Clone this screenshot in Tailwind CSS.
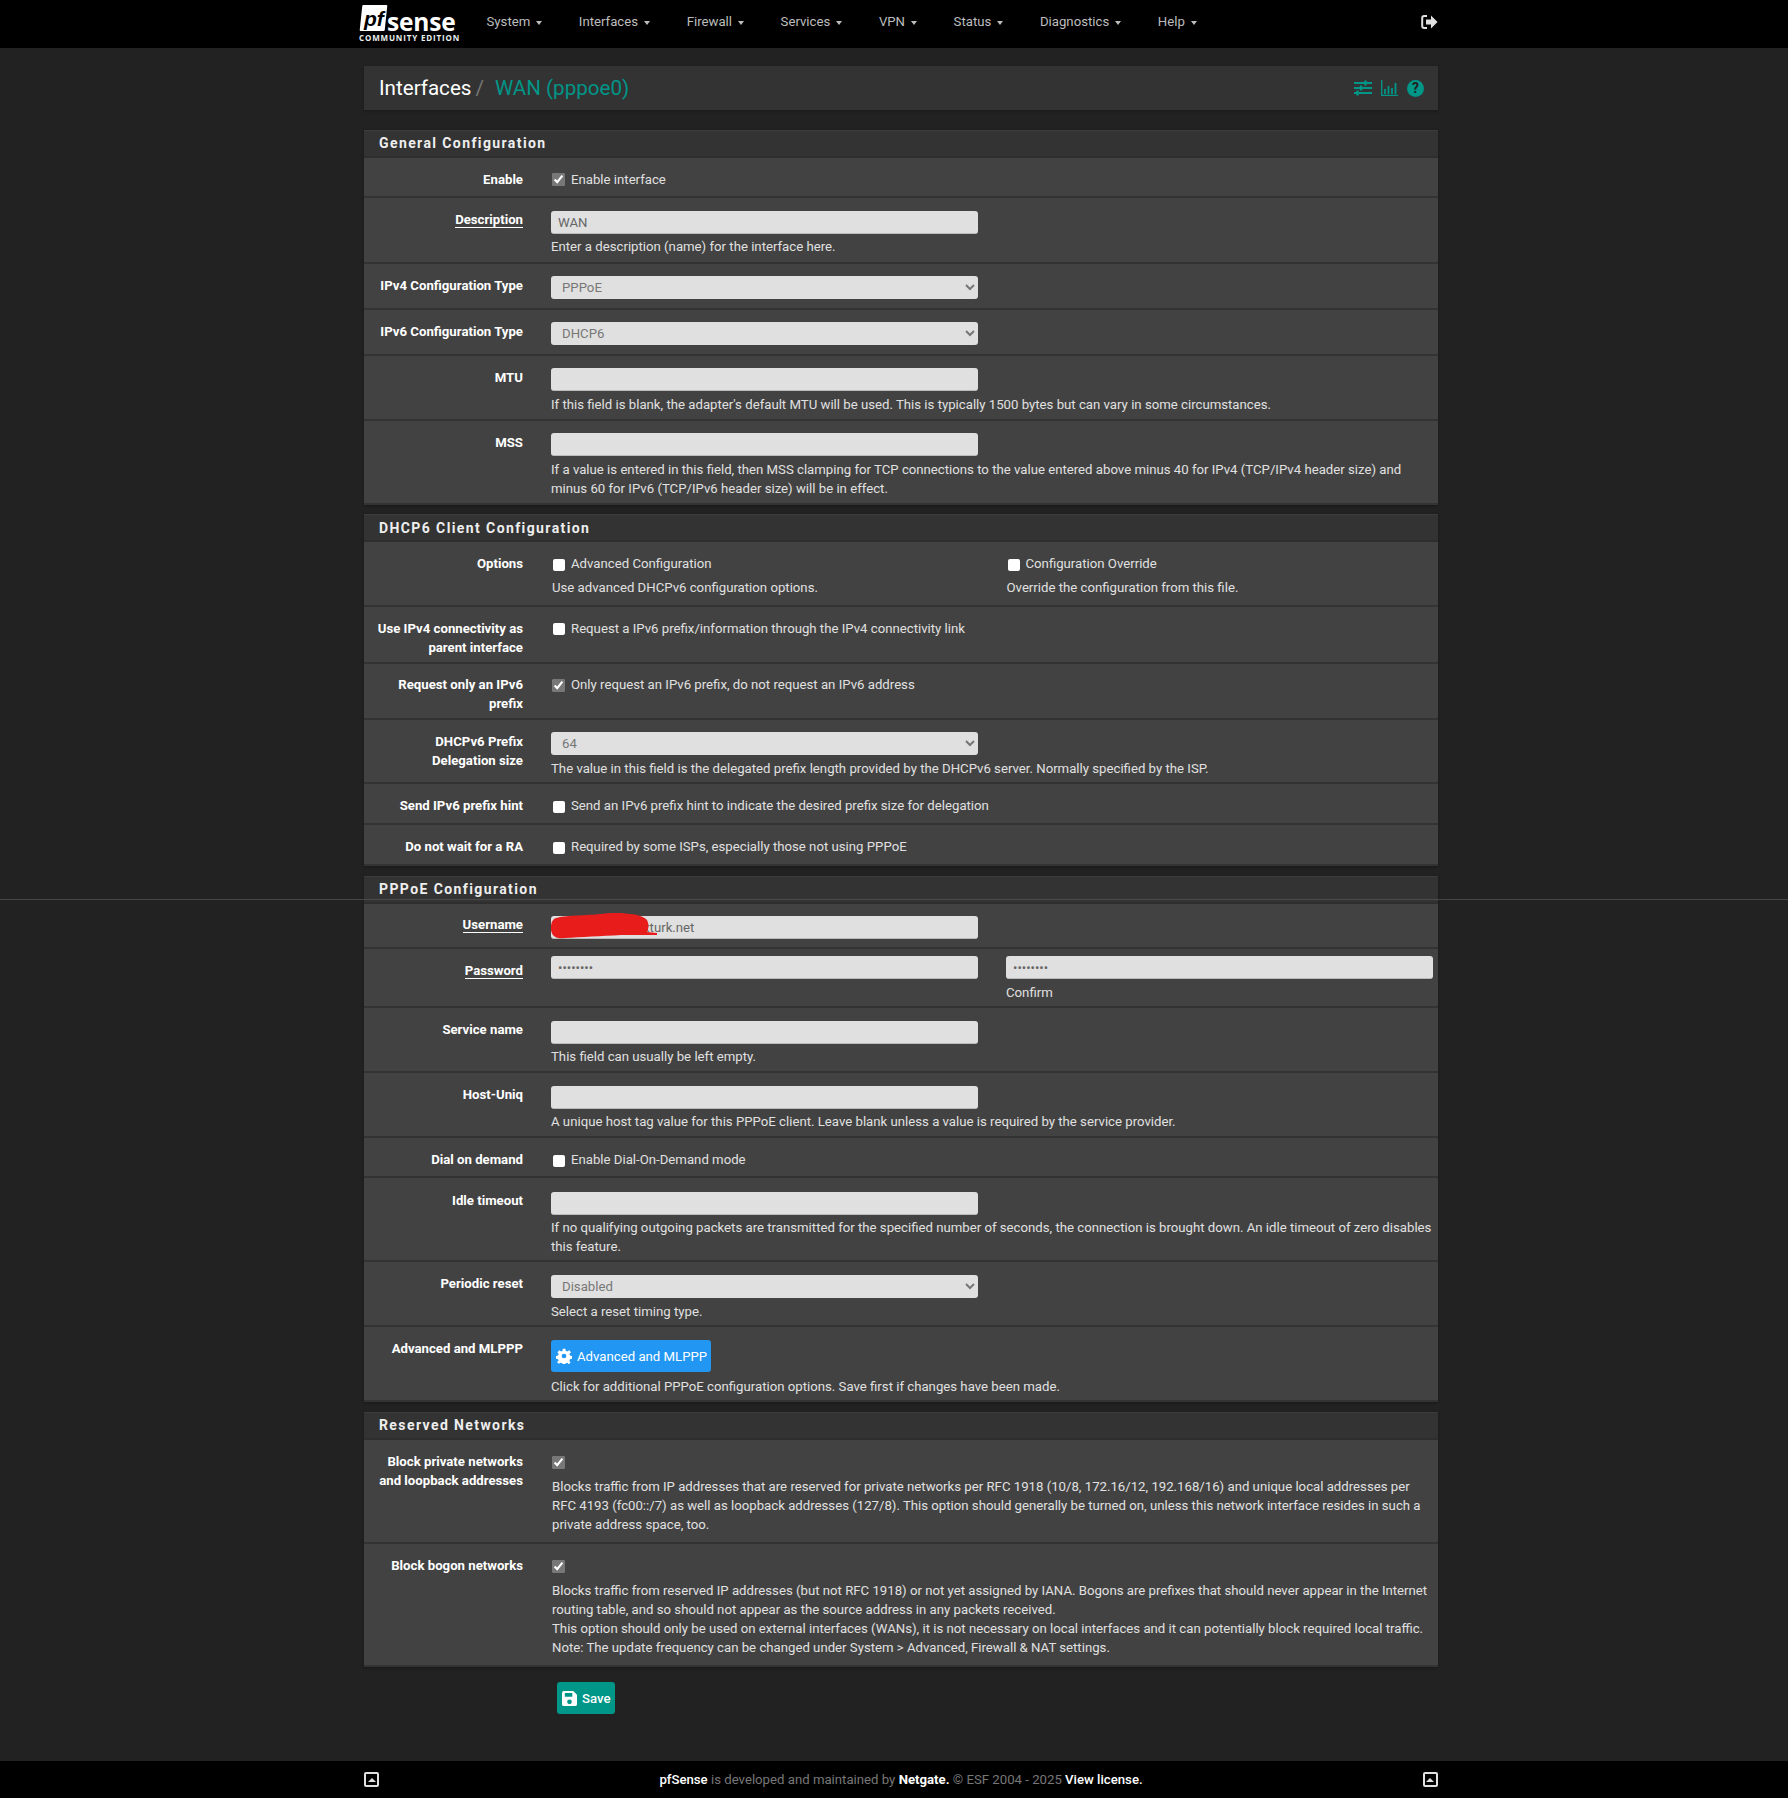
<!DOCTYPE html>
<html lang="en">
  <head>
    <meta charset="UTF-8" />
    <title>pfSense - Interfaces: WAN (pppoe0)</title>
    <script src="https://cdn.jsdelivr.net/npm/@tailwindcss/browser@4"></script>
  </head>
  <body class="bg-[#222222] font-['Roboto',sans-serif] text-[13.2px] leading-[19px] text-[#e0e0e0] relative h-[1798px] overflow-hidden flex flex-col">
    <!-- navbar -->
    <nav class="bg-black h-[48px] shrink-0">
      <div class="w-[1074px] ml-[364px] flex items-start relative h-full">
        <div class="w-[122.5px] h-full relative shrink-0">
          <div class="absolute left-[-3px] top-[5px] w-[25px] h-[26px] bg-white -skew-x-6 rounded-[1px] overflow-hidden flex items-end justify-center">
            <span class="text-black italic font-bold font-['Liberation_Sans',sans-serif] text-[21px] leading-[24px] skew-x-6">pf</span>
          </div>
          <span class="absolute left-[23px] top-[10px] text-white font-bold font-['Open_Sans',sans-serif] text-[24.5px] leading-[23px] tracking-[-0.2px]">sense</span>
          <span class="absolute left-[-5px] top-[33px] text-[#e8f0f0] font-bold font-['Open_Sans',sans-serif] text-[8px] leading-[10px] tracking-[0.85px] whitespace-nowrap">COMMUNITY EDITION</span>
        </div>
        <ul class="flex gap-[36.6px] text-[#bdbdbd] text-[13.2px] leading-[44px]">
          <li class="flex items-center gap-[6px]">System <span class="border-x-[3.5px] border-x-transparent border-t-[4px] border-t-[#bdbdbd] mt-[1px]"></span></li>
          <li class="flex items-center gap-[6px]">Interfaces <span class="border-x-[3.5px] border-x-transparent border-t-[4px] border-t-[#bdbdbd] mt-[1px]"></span></li>
          <li class="flex items-center gap-[6px]">Firewall <span class="border-x-[3.5px] border-x-transparent border-t-[4px] border-t-[#bdbdbd] mt-[1px]"></span></li>
          <li class="flex items-center gap-[6px]">Services <span class="border-x-[3.5px] border-x-transparent border-t-[4px] border-t-[#bdbdbd] mt-[1px]"></span></li>
          <li class="flex items-center gap-[6px]">VPN <span class="border-x-[3.5px] border-x-transparent border-t-[4px] border-t-[#bdbdbd] mt-[1px]"></span></li>
          <li class="flex items-center gap-[6px]">Status <span class="border-x-[3.5px] border-x-transparent border-t-[4px] border-t-[#bdbdbd] mt-[1px]"></span></li>
          <li class="flex items-center gap-[6px]">Diagnostics <span class="border-x-[3.5px] border-x-transparent border-t-[4px] border-t-[#bdbdbd] mt-[1px]"></span></li>
          <li class="flex items-center gap-[6px]">Help <span class="border-x-[3.5px] border-x-transparent border-t-[4px] border-t-[#bdbdbd] mt-[1px]"></span></li>
        </ul>
        <svg class="ml-auto mt-[14px] w-[17px] h-[16px]" viewBox="0 0 17 16" fill="none">
          <path d="M6 2H3.2C2 2 1.2 2.8 1.2 4v8c0 1.2.8 2 2 2H6" stroke="#e0e0e0" stroke-width="2" />
          <path d="M5 5.5h5V1.5l6.5 6.5-6.500 6.500v-4H5z" fill="#e0e0e0" />
        </svg>
      </div>
    </nav>

    <main class="w-[1074px] ml-[364px] grow">
      <!-- page title -->
      <div class="mt-[18px] h-[44px] bg-[#333333] shadow-[0_1px_3px_rgba(0,0,0,0.3)] flex items-center pl-[15px] pr-[14px] text-[20.6px]">
        <span class="text-white mt-[1px]">Interfaces</span>
        <span class="text-[#777777] ml-[4px] mt-[1px]">/</span>
        <span class="text-[#009688] ml-[11px] mt-[1px]">WAN (pppoe0)</span>
        <div class="ml-auto flex items-center gap-[9px]">
          <svg class="w-[18px] h-[16px]" viewBox="0 0 18 16" fill="none" stroke="#009688" stroke-width="2">
            <path d="M0 3h18M0 8h18M0 13h18" />
            <path d="M11.5 .5v5M7 5.5v5M3.500 10.500v5" stroke-width="2.4" />
          </svg>
          <svg class="w-[17px] h-[16px]" viewBox="0 0 17 16" fill="none" stroke="#009688">
            <path d="M.7 0v15.3H17" stroke-width="1.3" />
            <path d="M4 14V9M7.5 14V6M11 14V8M14.500 14V3" stroke-width="1.8" />
          </svg>
          <span class="w-[17px] h-[17px] rounded-full bg-[#009688] flex items-center justify-center text-[#222222] font-bold text-[14px] leading-none">?</span>
        </div>
      </div>

      <!-- General Configuration -->
      <section class="mt-[20px] shadow-[0_1px_3px_rgba(0,0,0,0.3)]">
        <h2 class="h-[28px] bg-[#333333] border-t border-[#3c3c3c] border-b-2 border-b-[#2e2e2e] pl-[15px] font-bold text-[14px] leading-[25px] tracking-[1.4px] text-[#eeeeee]">General Configuration</h2>
        <div class="flex bg-[#424242] border-b-2 border-[#333333] pt-[12px] pb-[5px] h-[40px]">
          <div class="w-[159px] pl-[11px] text-right font-bold text-white">Enable</div>
          <div class="ml-[28px] w-[881px] mb-[4px] flex items-center gap-[6px]"><input type="checkbox" checked class="accent-[#777777] size-[13px] ml-[1px] mt-[2px]" /><span class="mt-[2px]">Enable interface</span></div>
        </div>
        <div class="flex bg-[#424242] border-b-2 border-[#333333] pt-[12px] pb-[5px] h-[66px]">
          <div class="w-[159px] pl-[11px] text-right font-bold text-white"><span class="border-b border-white">Description</span></div>
          <div class="ml-[28px] w-[881px]">
            <input type="text" value="WAN" class="block w-[427px] h-[23px] mt-[1px] mb-[3px] px-[7px] rounded-[3px] bg-[#e0e0e0] text-[#666666] border-b border-[#bbbbbb]" />
            <p>Enter a description (name) for the interface here.</p>
          </div>
        </div>
        <div class="flex bg-[#424242] border-b-2 border-[#333333] pt-[12px] pb-[5px] h-[46px]">
          <div class="w-[159px] pl-[11px] text-right font-bold text-white">IPv4 Configuration Type</div>
          <div class="ml-[28px] w-[881px]">
            <select class="block w-[427px] h-[23px] pl-[7px] rounded-[3px] bg-[#e0e0e0] text-[#777777]"><option>PPPoE</option></select>
          </div>
        </div>
        <div class="flex bg-[#424242] border-b-2 border-[#333333] pt-[12px] pb-[5px] h-[46px]">
          <div class="w-[159px] pl-[11px] text-right font-bold text-white">IPv6 Configuration Type</div>
          <div class="ml-[28px] w-[881px]">
            <select class="block w-[427px] h-[23px] pl-[7px] rounded-[3px] bg-[#e0e0e0] text-[#777777]"><option>DHCP6</option></select>
          </div>
        </div>
        <div class="flex bg-[#424242] border-b-2 border-[#333333] pt-[12px] pb-[5px] h-[65px]">
          <div class="w-[159px] pl-[11px] text-right font-bold text-white">MTU</div>
          <div class="ml-[28px] w-[881px]">
            <input type="text" class="block w-[427px] h-[23px] mb-[4px] px-[7px] rounded-[3px] bg-[#e0e0e0] text-[#666666] border-b border-[#bbbbbb]" />
            <p>If this field is blank, the adapter's default MTU will be used. This is typically 1500 bytes but can vary in some circumstances.</p>
          </div>
        </div>
        <div class="flex bg-[#424242] border-b-2 border-[#333333] pt-[12px] pb-[5px] h-[84px]">
          <div class="w-[159px] pl-[11px] text-right font-bold text-white">MSS</div>
          <div class="ml-[28px] w-[881px]">
            <input type="text" class="block w-[427px] h-[23px] mb-[4px] px-[7px] rounded-[3px] bg-[#e0e0e0] text-[#666666] border-b border-[#bbbbbb]" />
            <p>If a value is entered in this field, then MSS clamping for TCP connections to the value entered above minus 40 for IPv4 (TCP/IPv4 header size) and minus 60 for IPv6 (TCP/IPv6 header size) will be in effect.</p>
          </div>
        </div>
      </section>

      <!-- DHCP6 Client Configuration -->
      <section class="mt-[9px] shadow-[0_1px_3px_rgba(0,0,0,0.3)]">
        <h2 class="h-[28px] bg-[#333333] border-t border-[#3c3c3c] border-b-2 border-b-[#2e2e2e] pl-[15px] font-bold text-[14px] leading-[26px] tracking-[1.4px] text-[#eeeeee]">DHCP6 Client Configuration</h2>
        <div class="flex bg-[#424242] border-b-2 border-[#333333] pt-[12px] pb-[5px] h-[65px]">
          <div class="w-[159px] pl-[11px] text-right font-bold text-white">Options</div>
          <div class="ml-[28px] w-[881px] flex">
            <div class="w-[455.5px]">
              <div class="mb-[4.5px] flex items-center gap-[6px]"><input type="checkbox" class="appearance-none bg-white rounded-[2px] size-[12px] ml-[2px] mt-[2px]" /><span>Advanced Configuration</span></div>
              <p class="ml-[1px]">Use advanced DHCPv6 configuration options.</p>
            </div>
            <div>
              <div class="mb-[4.5px] flex items-center gap-[6px]"><input type="checkbox" class="appearance-none bg-white rounded-[2px] size-[12px] ml-[1px] mt-[2px]" /><span>Configuration Override</span></div>
              <p>Override the configuration from this file.</p>
            </div>
          </div>
        </div>
        <div class="flex bg-[#424242] border-b-2 border-[#333333] pt-[12px] pb-[5px] h-[57px]">
          <div class="w-[159px] pl-[11px] text-right font-bold text-white">Use IPv4 connectivity as parent interface</div>
          <div class="ml-[28px] w-[881px] mb-[4px] flex items-start gap-[6px]"><input type="checkbox" class="appearance-none bg-white rounded-[2px] size-[12px] ml-[2px] mt-[4px]" /><span>Request a IPv6 prefix/information through the IPv4 connectivity link</span></div>
        </div>
        <div class="flex bg-[#424242] border-b-2 border-[#333333] pt-[11px] pb-[5px] h-[56px]">
          <div class="w-[159px] pl-[11px] text-right font-bold text-white">Request only an IPv6 prefix</div>
          <div class="ml-[28px] w-[881px] mb-[4px] flex items-start gap-[6px]"><input type="checkbox" checked class="accent-[#777777] size-[13px] ml-[1px] mt-[4px]" /><span>Only request an IPv6 prefix, do not request an IPv6 address</span></div>
        </div>
        <div class="flex bg-[#424242] border-b-2 border-[#333333] pt-[12px] pb-[5px] h-[64px]">
          <div class="w-[159px] pl-[11px] text-right font-bold text-white">DHCPv6 Prefix Delegation size</div>
          <div class="ml-[28px] w-[881px]">
            <select class="block w-[427px] h-[23px] mb-[4px] pl-[7px] rounded-[3px] bg-[#e0e0e0] text-[#777777]"><option>64</option></select>
            <p>The value in this field is the delegated prefix length provided by the DHCPv6 server. Normally specified by the ISP.</p>
          </div>
        </div>
        <div class="flex bg-[#424242] border-b-2 border-[#333333] pt-[12px] pb-[5px] h-[41px]">
          <div class="w-[159px] pl-[11px] text-right font-bold text-white">Send IPv6 prefix hint</div>
          <div class="ml-[28px] w-[881px] flex items-start gap-[6px]"><input type="checkbox" class="appearance-none bg-white rounded-[2px] size-[12px] ml-[2px] mt-[5px]" /><span>Send an IPv6 prefix hint to indicate the desired prefix size for delegation</span></div>
        </div>
        <div class="flex bg-[#424242] border-b-2 border-[#333333] pt-[12px] pb-[5px] h-[41px]">
          <div class="w-[159px] pl-[11px] text-right font-bold text-white">Do not wait for a RA</div>
          <div class="ml-[28px] w-[881px] flex items-start gap-[6px]"><input type="checkbox" class="appearance-none bg-white rounded-[2px] size-[12px] ml-[2px] mt-[5px]" /><span>Required by some ISPs, especially those not using PPPoE</span></div>
        </div>
      </section>

      <!-- PPPoE Configuration -->
      <section class="mt-[10px] shadow-[0_1px_3px_rgba(0,0,0,0.3)]">
        <h2 class="h-[28px] bg-[#333333] border-t border-[#3c3c3c] border-b-2 border-b-[#2e2e2e] pl-[15px] font-bold text-[14px] leading-[25px] tracking-[1.4px] text-[#eeeeee]">PPPoE Configuration</h2>
        <div class="flex bg-[#424242] border-b-2 border-[#333333] pt-[11px] pb-[5px] h-[45px]">
          <div class="w-[159px] pl-[11px] text-right font-bold text-white"><span class="border-b border-white">Username</span></div>
          <div class="ml-[28px] w-[881px] relative">
            <input type="text" value="xxxxxxxxxxxxxxturk.net" class="block w-[427px] h-[23px] mt-[1px] px-[7px] rounded-[3px] bg-[#e0e0e0] text-[#666666] border-b border-[#bbbbbb]" />
            <svg class="absolute left-0 top-[-2px] w-[108px] h-[26px]" viewBox="0 0 108 26">
              <path d="M3 6C10 2 30 3 50 1 65 -1 90 0 96 7c2 4 2 8 0 12l10 1v2H70c-20 1-40 2-56 3C6 26 1 24 0 17 0 12 0 9 3 6z" fill="#e91c1c" />
            </svg>
          </div>
        </div>
        <div class="flex bg-[#424242] border-b-2 border-[#333333] pt-[7px] pb-[5px] h-[59px]">
          <div class="w-[159px] pl-[11px] text-right font-bold text-white mt-[5px]"><span class="border-b border-white">Password</span></div>
          <div class="ml-[28px] w-[883px] flex gap-[28px]">
            <input type="password" value="password" class="block w-[427px] h-[23px] shrink-0 px-[7px] rounded-[3px] bg-[#e0e0e0] text-[#666666] text-[13px] border-b border-[#bbbbbb]" />
            <div class="w-[427px] shrink-0">
              <input type="password" value="password" class="block w-full h-[23px] px-[7px] rounded-[3px] bg-[#e0e0e0] text-[#666666] text-[13px] border-b border-[#bbbbbb]" />
              <p class="mt-[4px]">Confirm</p>
            </div>
          </div>
        </div>
        <div class="flex bg-[#424242] border-b-2 border-[#333333] pt-[12px] pb-[5px] h-[65px]">
          <div class="w-[159px] pl-[11px] text-right font-bold text-white">Service name</div>
          <div class="ml-[28px] w-[881px]">
            <input type="text" class="block w-[427px] h-[23px] mt-[1px] mb-[3px] px-[7px] rounded-[3px] bg-[#e0e0e0] text-[#666666] border-b border-[#bbbbbb]" />
            <p>This field can usually be left empty.</p>
          </div>
        </div>
        <div class="flex bg-[#424242] border-b-2 border-[#333333] pt-[12px] pb-[5px] h-[65px]">
          <div class="w-[159px] pl-[11px] text-right font-bold text-white">Host-Uniq</div>
          <div class="ml-[28px] w-[881px]">
            <input type="text" class="block w-[427px] h-[23px] mt-[1px] mb-[3px] px-[7px] rounded-[3px] bg-[#e0e0e0] text-[#666666] border-b border-[#bbbbbb]" />
            <p>A unique host tag value for this PPPoE client. Leave blank unless a value is required by the service provider.</p>
          </div>
        </div>
        <div class="flex bg-[#424242] border-b-2 border-[#333333] pt-[12px] pb-[5px] h-[40px]">
          <div class="w-[159px] pl-[11px] text-right font-bold text-white">Dial on demand</div>
          <div class="ml-[28px] w-[881px] flex items-start gap-[6px]"><input type="checkbox" class="appearance-none bg-white rounded-[2px] size-[12px] ml-[2px] mt-[5px]" /><span>Enable Dial-On-Demand mode</span></div>
        </div>
        <div class="flex bg-[#424242] border-b-2 border-[#333333] pt-[13px] pb-[5px] h-[84px]">
          <div class="w-[159px] pl-[11px] text-right font-bold text-white">Idle timeout</div>
          <div class="ml-[28px] w-[881px]">
            <input type="text" class="block w-[427px] h-[23px] mt-[1px] mb-[3px] px-[7px] rounded-[3px] bg-[#e0e0e0] text-[#666666] border-b border-[#bbbbbb]" />
            <p>If no qualifying outgoing packets are transmitted for the specified number of seconds, the connection is brought down. An idle timeout of zero disables this feature.</p>
          </div>
        </div>
        <div class="flex bg-[#424242] border-b-2 border-[#333333] pt-[12px] pb-[5px] h-[65px]">
          <div class="w-[159px] pl-[11px] text-right font-bold text-white">Periodic reset</div>
          <div class="ml-[28px] w-[881px]">
            <select class="block w-[427px] h-[23px] mt-[1px] mb-[4px] pl-[7px] rounded-[3px] bg-[#e0e0e0] text-[#777777]"><option>Disabled</option></select>
            <p>Select a reset timing type.</p>
          </div>
        </div>
        <div class="flex bg-[#424242] border-b-2 border-[#333333] pt-[12px] pb-[5px] h-[75px]">
          <div class="w-[159px] pl-[11px] text-right font-bold text-white">Advanced and MLPPP</div>
          <div class="ml-[28px] w-[881px]">
            <button class="flex items-center gap-[5px] h-[32px] w-[160px] pl-[5px] mt-[1px] mb-[5px] rounded-[3px] bg-[#2196f3] text-white">
              <svg class="w-[16px] h-[16px]" viewBox="0 0 24 24" fill="#ffffff"><path fill-rule="evenodd" d="M10 1h4l.7 3.200 2.300 1 2.800-1.800 2.800 2.800L20 9l1 2.300 3 .7v4l-3 .7-1 2.300 1.800 2.800-2.800 2.800L17 22l-2.300 1-.7 1h-4l-.7-1-2.300-1-2.800 1.800-2.800-2.800L4 19l-1-2.300-3-.7v-4l3-.7 1-2.300-1.800-2.800L5 3.400 7.800 5.200l2.200-1zM12 8.500a3.500 3.500 0 1 0 0 7 3.500 3.500 0 0 0 0-7z" /></svg>
              Advanced and MLPPP
            </button>
            <p>Click for additional PPPoE configuration options. Save first if changes have been made.</p>
          </div>
        </div>
      </section>

      <!-- Reserved Networks -->
      <section class="mt-[10px] shadow-[0_1px_3px_rgba(0,0,0,0.3)]">
        <h2 class="h-[28px] bg-[#333333] border-t border-[#3c3c3c] border-b-2 border-b-[#2e2e2e] pl-[15px] font-bold text-[14px] leading-[25px] tracking-[1.4px] text-[#eeeeee]">Reserved Networks</h2>
        <div class="flex bg-[#424242] border-b-2 border-[#333333] pt-[12px] pb-[5px] h-[104px]">
          <div class="w-[159px] pl-[11px] text-right font-bold text-white">Block private networks and loopback addresses</div>
          <div class="ml-[28px] w-[881px]">
            <div class="mb-[6px] h-[19px] flex items-center"><input type="checkbox" checked class="accent-[#777777] size-[13px] ml-[1px] mt-[2px]" /></div>
            <p class="ml-[1px]">Blocks traffic from IP addresses that are reserved for private networks per RFC 1918 (10/8, 172.16/12, 192.168/16) and unique local addresses per RFC 4193 (fc00::/7) as well as loopback addresses (127/8). This option should generally be turned on, unless this network interface resides in such a private address space, too.</p>
          </div>
        </div>
        <div class="flex bg-[#424242] border-b-2 border-[#333333] pt-[12px] pb-[5px] h-[123px]">
          <div class="w-[159px] pl-[11px] text-right font-bold text-white">Block bogon networks</div>
          <div class="ml-[28px] w-[881px]">
            <div class="mb-[6px] h-[19px] flex items-center"><input type="checkbox" checked class="accent-[#777777] size-[13px] ml-[1px] mt-[1px]" /></div>
            <p class="ml-[1px]">Blocks traffic from reserved IP addresses (but not RFC 1918) or not yet assigned by IANA. Bogons are prefixes that should never appear in the Internet routing table, and so should not appear as the source address in any packets received.<br />This option should only be used on external interfaces (WANs), it is not necessary on local interfaces and it can potentially block required local traffic.<br />Note: The update frequency can be changed under System &gt; Advanced, Firewall &amp; NAT settings.</p>
          </div>
        </div>
      </section>

      <button class="ml-[193px] mt-[15px] flex items-center gap-[5px] h-[32px] w-[58px] pl-[5px] rounded-[3px] bg-[#009688] text-white font-medium">
        <svg class="w-[15px] h-[15px]" viewBox="0 0 16 16" fill="#ffffff"><path fill-rule="evenodd" d="M2 0h10l4 4v10a2 2 0 0 1-2 2H2a2 2 0 0 1-2-2V2a2 2 0 0 1 2-2zm1 2v4h8V2zm5 7a2.500 2.500 0 1 0 0 5 2.500 2.500 0 0 0 0-5z" /></svg>
        Save
      </button>
    </main>

    <!-- footer -->
    <footer class="bg-black h-[37px] shrink-0">
      <div class="w-[1074px] ml-[364px] flex items-center justify-between h-full">
        <span class="w-[15px] h-[15px] border-2 border-[#e0e0e0] rounded-[2px] flex items-center justify-center"><span class="border-x-[4px] border-x-transparent border-b-[4px] border-b-[#e0e0e0]"></span></span>
        <p class="text-[#777777]"><b class="text-white font-medium">pfSense</b> is developed and maintained by <b class="text-white font-bold">Netgate.</b> © ESF 2004 - 2025 <b class="text-white font-medium">View license.</b></p>
        <span class="w-[15px] h-[15px] border-2 border-[#e0e0e0] rounded-[2px] flex items-center justify-center"><span class="border-x-[4px] border-x-transparent border-b-[4px] border-b-[#e0e0e0]"></span></span>
      </div>
    </footer>

    <!-- stitching seam that crosses the whole screenshot -->
    <div class="absolute left-0 right-0 top-[899px] h-px bg-[#555555]/70"></div>
  </body>
</html>
